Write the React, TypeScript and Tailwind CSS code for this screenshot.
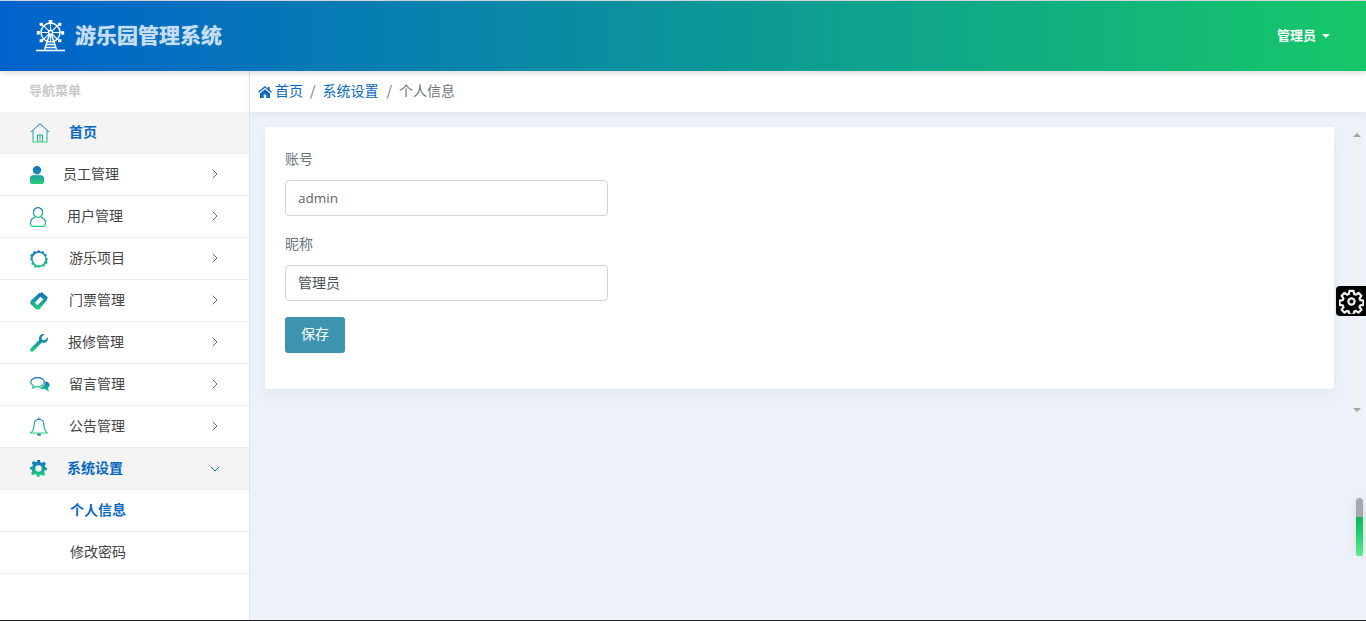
import React from 'react';
import { ChevronRight, ChevronDown } from 'lucide-react';

const cjk = '"Noto Sans CJK SC", sans-serif';

// shared gradient for the sidebar icons
const Grad = ({ id }: { id: string }) => (
  <linearGradient id={id} x1="0" y1="0" x2="0" y2="1">
    <stop offset="0" stopColor="#0a6bc6" />
    <stop offset="1" stopColor="#25d07c" />
  </linearGradient>
);

const HomeIcon = () => (
  <svg width="20" height="20" viewBox="0 0 20 20" fill="none" stroke="url(#g-home)" strokeWidth="1">
    <defs><Grad id="g-home" /></defs>
    <path d="M.8 9 10 .8 19.200 9M3 7.800V19h14V7.800M7.500 19v-7h5v7M10 12v7" />
  </svg>
);
const PersonIcon = () => (
  <svg width="14" height="18" viewBox="0 0 14 18">
    <defs><Grad id="g-person" /></defs>
    <path fill="url(#g-person)" d="M7 0a4.200 4.200 0 0 1 0 8.400a4.200 4.200 0 0 1 0-8.400ZM3 9.300h8c1.700 0 3 1.300 3 3V16c0 1.100-.9 2-2 2H2c-1.100 0-2-.9-2-2v-3.700c0-1.700 1.300-3 3-3Z" />
  </svg>
);
const UserOutlineIcon = () => (
  <svg width="16" height="20" viewBox="0 0 16 20" fill="none" stroke="url(#g-user)" strokeWidth="1.200">
    <defs><Grad id="g-user" /></defs>
    <ellipse cx="8" cy="5.500" rx="4.600" ry="4.900" />
    <path d="M5 10.200C2.400 11 .6 12.600.6 15.500v1.300c0 1.400 1 2.500 2.500 2.500h9.800c1.500 0 2.500-1.100 2.500-2.500v-1.300c0-2.900-1.800-4.500-4.400-5.300" />
  </svg>
);
const SunIcon = () => (
  <svg width="18" height="18" viewBox="0 0 18 18">
    <defs><Grad id="g-sun" /></defs>
    <path
      fill="url(#g-sun)"
      fillRule="evenodd"
      d="M9 0l1.800 1.900 2.500-1 .9 2.700 2.700.9-1 2.500L18 9l-1.100 1.800 1 2.500-2.700.9-.9 2.700-2.500-1L9 18l-1.800-1.100-2.500 1-.9-2.700-2.700-.9 1-2.500L0 9l1.100-1.800-1-2.500 2.700-.9.9-2.700 2.500 1L9 0ZM9 2.700a6.300 6.300 0 1 0 0 12.600A6.300 6.300 0 0 0 9 2.700Z"
    />
  </svg>
);
const TicketIcon = () => (
  <svg width="18" height="18" viewBox="0 0 18 18">
    <defs><Grad id="g-ticket" /></defs>
    <path
      fill="url(#g-ticket)"
      fillRule="evenodd"
      d="M11.500 0 18 5.500c-.9.700-1.100 1.500-.7 2.300L9 17.800c-.8-.7-1.700-.7-2.500-.1L0 11.500c.8-.7 1-1.600.4-2.400L9.300 1c.7.500 1.500.3 2.200-1ZM10.300 4.800 4.700 10.900l3 2.400 5.600-6.100-3-2.400Z"
    />
  </svg>
);
const WrenchIcon = () => (
  <svg width="18" height="18" viewBox="0 0 18 18">
    <defs><Grad id="g-wrench" /></defs>
    <path
      fill="url(#g-wrench)"
      d="M17.800 3.200c.6 2.400-.6 4.700-2.800 5.500-1.100.4-2.200.3-3.100-.1L3.600 17.100c-.9.900-2.100.9-2.900.1-.8-.8-.8-2-.1-2.800l8.600-8.500c-.3-1-.3-2 .1-3C10.100.8 12.200-.3 14.500.1l-3 3 .5 2.600 2.600.6 3.200-3.100Z"
    />
  </svg>
);
const ChatIcon = () => (
  <svg width="20" height="16" viewBox="0 0 20 16">
    <defs><Grad id="g-chat" /></defs>
    <path fill="none" stroke="url(#g-chat)" strokeWidth="1.300" d="M7.500.7c3.700 0 6.800 2 6.800 4.600s-3.100 4.600-6.800 4.600c-.7 0-1.300-.1-1.900-.2L2.800 11l.7-2.300C1.800 7.800.7 6.600.7 5.300.7 2.700 3.800.7 7.500.7Z" />
    <path fill="url(#g-chat)" d="M15.300 4.200c2.600.5 4.400 2 4.400 3.900 0 1.200-.7 2.200-1.800 2.900l1.100 3.800-4.300-2.700c-2.300.2-4.400-.3-5.700-1.500 3.700-.1 6.900-2.600 6.300-6.400Z" />
  </svg>
);
const BellIcon = () => (
  <svg width="18" height="20" viewBox="0 0 18 20" fill="none" stroke="url(#g-bell)" strokeWidth="1.100">
    <defs><Grad id="g-bell" /></defs>
    <path d="M9 .4v1.800M9 2.200c-3.200 0-4.900 2.500-4.900 5.500 0 4-1.200 6.500-3.500 8.300h16.800c-2.300-1.800-3.500-4.300-3.500-8.300 0-3-1.700-5.500-4.900-5.500Z" />
    <path fill="url(#g-bell)" stroke="none" d="M6.800 16.800h4.400a2.200 2.200 0 0 1-4.400 0Z" />
  </svg>
);
const CogIcon = () => (
  <svg width="17" height="17" viewBox="0 0 24 24">
    <defs><Grad id="g-cog" /></defs>
    <path
      fill="url(#g-cog)"
      fillRule="evenodd"
      d="M10 0h4l.7 3.300 2.200.9 2.900-1.800 2.800 2.800-1.800 2.900.9 2.200L24 11v3l-3.300.7-.9 2.200 1.800 2.900-2.800 2.800-2.900-1.800-2.200.9L13 24h-3l-.7-3.300-2.200-.9-2.900 1.800-2.800-2.800 1.800-2.900-.9-2.200L0 13v-3l3.300-.7.900-2.200-1.800-2.900 2.800-2.800 2.900 1.800 2.200-.9L10 0Zm2 7.500a4.500 4.500 0 1 0 0 9 4.500 4.500 0 0 0 0-9Z"
    />
  </svg>
);

// logo: ferris wheel, white lines with gondolas round the rim
const WheelLogo = () => (
  <svg width="30" height="32" viewBox="0 0 30 32" fill="none" stroke="#fff" strokeWidth="1.500" className="shrink-0">
    <circle cx="14.500" cy="12.500" r="9.500" />
    <circle cx="14.500" cy="12.500" r="2" />
    <path strokeWidth="1.200" d="M14.500 3v7.500M14.500 14.500V22M5 12.500h7.500M16.500 12.500H24M7.800 5.800l5.300 5.300M15.900 13.900l5.300 5.300M21.200 5.800l-5.300 5.300M13.100 13.900l-5.300 5.300" />
    <g fill="#fff" stroke="none">
      <rect x="12.700" y="0" width="3.600" height="3" />
      <rect x="0.800" y="11" width="3" height="3.600" />
      <rect x="25.200" y="11" width="3" height="3.600" />
      <rect x="3.600" y="2.800" width="3.400" height="3" />
      <rect x="22" y="2.800" width="3.400" height="3" />
      <rect x="3.600" y="19.200" width="3.400" height="3" />
      <rect x="22" y="19.200" width="3.400" height="3" />
    </g>
    <path d="M13.500 14.500 8.500 29.500M15.500 14.500l5 15M11 24.500h7M10 27.500h9" />
    <path d="M0 30.500h29" strokeWidth="1.600" />
  </svg>
);

const GearOutline = () => (
  <svg width="25" height="25" viewBox="0 0 24 24" fill="none" stroke="#f2f2f2" strokeWidth="2.100" strokeLinejoin="round">
    <path d="M10 1.800h4l.5 3 1.700.7 2.500-1.800 2.800 2.800-1.800 2.500.7 1.700 3 .5v4l-3 .5-.7 1.700 1.800 2.500-2.800 2.800-2.500-1.800-1.700.7-.5 3h-4l-.5-3-1.700-.7-2.500 1.800-2.800-2.800 1.800-2.500-.7-1.700-3-.5v-4l3-.5.7-1.700-1.800-2.500 2.800-2.800 2.500 1.800 1.700-.7.5-3Z" />
    <circle cx="12" cy="12" r="3" />
  </svg>
);

const HomeSolid = () => (
  <svg width="14" height="12" viewBox="0 0 14 12" fill="#0868c4">
    <path d="M7 0 0 5.700l.9 1.100L7 1.800l6.100 5 .9-1.100-2.300-1.900V1h-2v1.700L7 0ZM2 7.400V12h3.700V8.500h2.600V12H12V7.400L7 3.200 2 7.400Z" />
  </svg>
);

type MenuItem = { label: string; icon: React.ReactNode; textClass: string };

const menuItems: MenuItem[] = [
  { label: '员工管理', icon: <PersonIcon />, textClass: 'ml-[19px]' },
  { label: '用户管理', icon: <UserOutlineIcon />, textClass: 'ml-[21px]' },
  { label: '游乐项目', icon: <SunIcon />, textClass: 'ml-[21px]' },
  { label: '门票管理', icon: <TicketIcon />, textClass: 'ml-[21px]' },
  { label: '报修管理', icon: <WrenchIcon />, textClass: 'ml-[20px]' },
  { label: '留言管理', icon: <ChatIcon />, textClass: 'ml-[19px]' },
  { label: '公告管理', icon: <BellIcon />, textClass: 'ml-[21px]' },
];

const Sidebar = () => (
  <aside className="w-[250px] shrink-0 bg-white border-r border-[#dfe3ee]">
    <div className="h-[41px] pl-[29px] pb-[4px] flex items-center text-[13px] font-bold text-[#c8c8c8]">导航菜单</div>

    <div className="h-[42px] pl-[30px] flex items-center bg-[#f4f4f4] border-b border-[#ececec]">
      <HomeIcon />
      <span className="ml-[19px] mb-[2px] text-[14px] font-bold text-[#0868c4]">首页</span>
    </div>

    {menuItems.map((item) => (
      <div key={item.label} className="h-[42px] pl-[30px] pr-[26px] flex items-center border-b border-[#ececec]">
        <span className="flex items-center">{item.icon}</span>
        <span className={`${item.textClass} mb-[2px] text-[14px] text-[#444]`}>{item.label}</span>
        <ChevronRight className="ml-auto mb-[2px] w-4 h-4 text-[#666]" strokeWidth={1.500} />
      </div>
    ))}

    <div className="h-[42px] pl-[30px] pr-[26px] flex items-center bg-[#f4f4f4] border-b border-[#ececec]">
      <CogIcon />
      <span className="ml-[20px] mb-[2px] text-[14px] font-bold text-[#0868c4]">系统设置</span>
      <ChevronDown className="ml-auto w-4 h-4 text-[#0868c4]" strokeWidth={1.500} />
    </div>

    <div className="h-[42px] pl-[70px] pb-[2px] flex items-center border-b border-[#ececec] text-[14px] font-bold text-[#0868c4]">个人信息</div>
    <div className="h-[42px] pl-[70px] pb-[2px] flex items-center border-b border-[#ececec] text-[14px] text-[#444]">修改密码</div>
  </aside>
);

export default function App() {
  return (
    <div className="relative w-[1366px] h-[621px] overflow-hidden flex flex-col bg-[#edf1f9] border-b border-[#222]" style={{ fontFamily: cjk }}>
      <header className="relative z-10 h-[71px] shrink-0 pl-[36px] pr-[36px] flex items-center bg-linear-to-r/srgb from-[#0062cc] to-[#16c768] border-t border-[#cfd6de] shadow-[0_2px_6px_rgba(0,0,0,0.15)]">
        <WheelLogo />
        <span className="ml-[9px] mb-[2px] text-[21px] font-bold text-[#c5def3] [text-shadow:0_0_1px_#c5def3]">游乐园管理系统</span>
        <div className="ml-auto mb-[2px] flex items-center text-[13px] font-bold text-white">
          管理员
          <span className="ml-[6px] mt-[1px] border-x-[4px] border-x-transparent border-t-[4px] border-t-white" />
        </div>
      </header>

      <div className="flex flex-1 min-h-0">
        <Sidebar />

        <main className="flex-1 min-w-0 flex flex-col">
          <nav className="h-[41px] shrink-0 pl-[8px] flex items-center bg-white shadow-[0_2px_6px_rgba(60,80,130,0.08)] text-[14px]">
            <HomeSolid />
            <span className="ml-[3px] mb-[2px] text-[#0868c4]">首页</span>
            <span className="mx-[7px] mb-[2px] text-[#6c757d]">/</span>
            <span className="mb-[2px] text-[#0868c4]">系统设置</span>
            <span className="ml-[8px] mr-[7px] mb-[2px] text-[#6c757d]">/</span>
            <span className="mb-[2px] text-[#6c757d]">个人信息</span>
          </nav>

          <div className="flex pt-[15px] pl-[15px] pr-[2px]">
            <section className="w-[1069px] h-[262px] px-[20px] pt-[21px] bg-white rounded-[3px] shadow-[0_6px_14px_rgba(160,175,210,0.12)]">
              <div className="h-[21px] mb-[11px] text-[14px] leading-[21px] text-[#6c757d]">账号</div>
              <input
                readOnly
                value="admin"
                className="block w-[323px] h-[36px] px-[12px] text-[13.500px] text-[#5c6670] bg-white border border-[#ced4da] rounded-[4px] outline-none font-['Open_Sans',sans-serif]"
              />
              <div className="h-[21px] mt-[17px] mb-[11px] text-[14px] leading-[21px] text-[#6c757d]">昵称</div>
              <input
                readOnly
                value="管理员"
                className="block w-[323px] h-[36px] px-[12px] pb-[2px] text-[14px] text-[#495057] bg-white border border-[#ced4da] rounded-[4px] outline-none"
              />
              <button className="block mt-[16px] w-[60px] h-[36px] pb-[3px] bg-[#3d94ae] text-white text-[14px] rounded-[3px]">保存</button>
            </section>
            <div className="ml-[16px] w-[14px] h-[291px] bg-[#f0f1f4] flex flex-col items-center justify-between py-[6px]">
              <span className="border-x-[4px] border-x-transparent border-b-[4px] border-b-[#a5a5a5]" />
              <span className="border-x-[4px] border-x-transparent border-t-[4px] border-t-[#a5a5a5]" />
            </div>
          </div>
        </main>
      </div>

      {/* floating widgets over the right edge */}
      <div className="absolute left-[1336px] top-[286px] w-[30px] h-[30px] pl-[1px] bg-black rounded-l-[4px] flex items-center justify-center">
        <GearOutline />
      </div>
      <div className="absolute left-[1356px] top-[498px] w-[7px] h-[58px] rounded-full overflow-hidden bg-[#a5a8ad] shadow-[0_0_8px_rgba(0,0,0,0.1)]">
        <div className="mt-[19px] h-[39px] bg-gradient-to-b from-[#12b85a] via-[#1fd271] to-[#62ec8a]" />
      </div>
    </div>
  );
}
